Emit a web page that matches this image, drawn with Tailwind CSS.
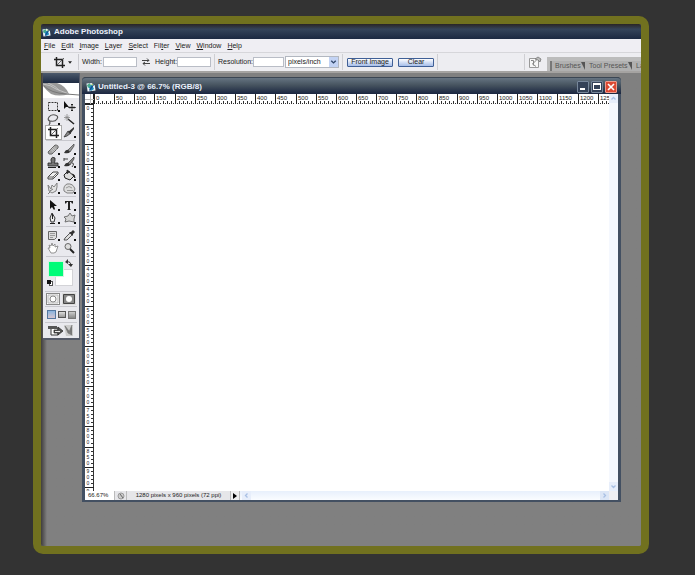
<!DOCTYPE html>
<html lang="en">
<head>
<meta charset="utf-8">
<title>Adobe Photoshop</title>
<script src="https://cdn.jsdelivr.net/npm/@tailwindcss/browser@4"></script>
</head>
<body class="flex min-h-screen flex-col bg-[#333333] pt-4 pr-[46px] pb-[21px] pl-[33px] font-['Liberation_Sans',Arial,sans-serif] text-[7px] leading-[10px] text-[#222]">
<svg class="hidden">
  <defs>
    <symbol id="app" viewBox="0 0 10 10"><path d="M1 1h5l3 3v5H1z" fill="#eef6fa" transform="rotate(-8 5 5)"/><path d="M2 4l4-1 2 4-3 2z" fill="#168bc0"/><path d="M1 3l3-2 1 3-3 2z" fill="#49a88b"/><path d="M3 8l4-6 1 1-4 6z" fill="#164d8c"/><path d="M5 2h2v2" fill="#a6d06b"/></symbol>
    <symbol id="crop" viewBox="0 0 15 13"><path d="M4.500 1v8.500h8.500M2 3.500h8.500V12" fill="none" stroke="#222" stroke-width="1.500"/><path d="M4.500 9.500L12 2" stroke="#444" stroke-width=".8"/></symbol>
    <symbol id="up" viewBox="0 0 9 9"><path d="M2.500 5.500l2-2 2 2" fill="none" stroke="#a9c0e4" stroke-width="1.300"/></symbol>
  </defs>
</svg>
<main class="flex flex-1 flex-col overflow-hidden rounded-[10px] border-8 border-[#71711f] bg-[#71711f]">
  <div class="flex flex-1 flex-col bg-[#808080]">
    <header class="flex h-[15px] items-center gap-[3px] bg-linear-to-b from-[#292526] via-[#35445a] via-35% to-[#1c2941] pt-px pl-px text-[8px] font-bold text-[#edf1fb]">
      <svg class="size-[9px]"><use href="#app"/></svg>
      <h1>Adobe Photoshop</h1>
    </header>
    <nav class="flex h-[13px] items-center gap-[6px] bg-[#efeef3] pl-[3px]">
      <a href="#"><u>F</u>ile</a><a href="#"><u>E</u>dit</a><a href="#"><u>I</u>mage</a><a href="#"><u>L</u>ayer</a><a href="#"><u>S</u>elect</a><a href="#">Fil<u>t</u>er</a><a href="#"><u>V</u>iew</a><a href="#"><u>W</u>indow</a><a href="#"><u>H</u>elp</a>
    </nav>
    <form class="flex h-[21px] items-center overflow-hidden border-t border-b-2 border-t-[#d6d6da] border-b-[#a5a3a1] bg-[#ededf1] whitespace-nowrap">
      <button type="button" aria-label="Crop tool presets" class="ml-[11px] flex h-4 w-[27px] shrink-0 items-center gap-[1px] border-r border-[#c9c9ce]"><svg class="h-[13px] w-[15px] shrink-0"><use href="#crop"/></svg><svg class="h-[3px] w-[4px]" viewBox="0 0 5 3"><path d="M0 0h5L2.500 3z" fill="#222"/></svg></button>
      <div class="ml-[3px] flex w-[55px] shrink-0 items-center justify-between"><label for="w">Width:</label><input id="w" class="h-[10px] w-[34px] border border-[#b9bdc6] bg-white"></div>
      <button type="button" aria-label="Swap width and height" class="mx-[5px] shrink-0"><svg class="h-[8px] w-[8px]" viewBox="0 0 8 8" fill="none" stroke="#444"><path d="M0 2.500h7M5 .5l2 2-2 1M8 5.500H1M3 4L1 5.500l2 2"/></svg></button>
      <div class="flex w-[56px] shrink-0 items-center justify-between"><label for="h">Height:</label><input id="h" class="h-[10px] w-[34px] border border-[#b9bdc6] bg-white"></div>
      <div class="mx-[3px] h-4 w-px shrink-0 bg-[#cfcfd3]"></div>
      <div class="flex w-[66px] shrink-0 items-center justify-between"><label for="r">Resolution:</label><input id="r" class="h-[10px] w-[34px] min-w-0 border border-[#b9bdc6] bg-white"></div>
      <div class="relative ml-px shrink-0">
        <select aria-label="Resolution unit" class="block h-3 w-[54px] appearance-none border border-[#b2b7c0] bg-white pl-[2px] leading-[10px]"><option>pixels/inch</option><option>pixels/cm</option></select>
        <svg class="pointer-events-none absolute top-px right-px h-[10px] w-[9px] bg-[#c3d3f4]" viewBox="0 0 10 10"><path d="M2.500 3.500L5 6l2.500-2.500" fill="none" stroke="#304669" stroke-width="1.500"/></svg>
      </div>
      <div class="mr-1 ml-[3px] h-4 w-px shrink-0 bg-[#cfcfd3]"></div>
      <button type="button" class="flex h-[9px] w-[46px] shrink-0 items-center justify-center rounded-[1px] border border-[#3f5f96] bg-linear-to-b from-white to-[#a6bde8]">Front Image</button>
      <button type="button" class="ml-[5px] flex h-[9px] w-9 shrink-0 items-center justify-center rounded-[1px] border border-[#3f5f96] bg-linear-to-b from-white to-[#a6bde8]">Clear</button>
      <div class="ml-[3px] h-4 w-px shrink-0 bg-[#cfcfd3]"></div>
      <div class="ml-auto h-4 w-px shrink-0 bg-[#cfcfd3]"></div>
      <button type="button" aria-label="Go to Bridge" class="mr-[5px] ml-[3px] shrink-0"><svg class="h-[13px] w-[14px]" viewBox="0 0 14 13"><path d="M1.500 2.500h9v9h-9z" fill="#f7f7f7" stroke="#999"/><path d="M3 4.500h2.500v5M4 7.500l4 3M5.500 7l3-3" stroke="#888" fill="none"/><path d="M7 3l3-2 3 2-1 3-2-2z" fill="#bbb" stroke="#777" stroke-width=".8"/></svg></button>
      <div class="mt-1 flex h-[14px] w-[94px] shrink-0 items-end overflow-hidden bg-[#bcbcbc] pl-[3px] text-[#555]">
        <a href="#" class="flex h-[10px] w-[35px] items-center border-l-2 border-[#777] bg-[#b0b0b0] pl-[3px]">Brushes<svg class="ml-auto h-[9px] w-[5px] shrink-0" viewBox="0 0 5 9"><path d="M0 0h4v8z" fill="#555"/></svg></a>
        <a href="#" class="flex h-[10px] w-[47px] items-center bg-[#b0b0b0] pl-[4px]">Tool Presets<svg class="ml-auto h-[9px] w-[5px] shrink-0" viewBox="0 0 5 9"><path d="M0 0h4v8z" fill="#555"/></svg></a>
        <a href="#" class="h-[10px] shrink-0 bg-[#b0b0b0] pl-[4px]">Layer Comps</a>
      </div>
    </form>

    <div class="flex flex-1 bg-linear-to-r from-[#403e3d] to-[#808080] to-[6px]">
      <aside aria-label="Tools" class="ml-[2px] flex w-[37px] shrink-0 flex-col self-start border-r border-b-2 border-[#555a68] bg-[#e9e9ee]">
        <div class="h-[10px] bg-linear-to-b from-[#4c596b] to-[#1d2a42]"></div>
        <svg class="h-[15px] w-full shrink-0 bg-white" viewBox="0 0 36 15" preserveAspectRatio="none"><path d="M0 0h14q9 3 12 11-10 3-18 0Q3 7 0 3z" fill="#999"/><path d="M0 1q8 1 13 5l13 5M5 0q8 3 12 8" fill="none" stroke="#c4c4c4"/><path d="M1 3q7 7 22 8l13 1" fill="none" stroke="#777"/></svg>
        <div id="tools" class="flex flex-col px-[3px]"></div>
        <div class="mx-[2px] flex h-[35px] border-b border-[#c8c8ce] px-px pt-[2px]">
          <svg class="h-[31px] w-[29px]" viewBox="0 0 29 31"><rect x="9.500" y="10.500" width="17" height="16" fill="#fff" stroke="#d3d3d7"/><rect x="2.500" y="2.500" width="15" height="15" fill="#00fc78" stroke="#d5f2e0"/><path d="M21 3q4-1 4 4" fill="none" stroke="#333"/><path d="M22 0v5l-3-2zM22 5h5l-2 3z" fill="#333"/><rect x="3.500" y="22.500" width="3" height="4" fill="#fff" stroke="#555"/><rect x="1" y="21" width="4" height="4" fill="#111"/></svg>
        </div>
        <div class="mx-[2px] flex h-[15px] items-center justify-center gap-[2px] border-b border-[#c8c8ce]">
          <button aria-label="Standard mode" class="h-3 w-[14px] border border-[#888] bg-white"><svg class="h-[10px] w-3" viewBox="0 0 12 10"><path d="M1 1h10v8H1z" fill="#eee" stroke="#bbb"/><circle cx="6" cy="5" r="3" fill="#fff" stroke="#888"/></svg></button>
          <button aria-label="Quick mask mode" class="h-3 w-[14px] bg-[#ddd]"><svg class="h-3 w-[14px]" viewBox="0 0 14 12"><path d="M1.500 1.500h11v9h-11z" fill="#888" stroke="#444"/><circle cx="7" cy="6" r="3" fill="#fff"/></svg></button>
        </div>
        <div class="mx-[2px] flex h-[16px] items-center justify-center gap-[2px] border-b border-[#c8c8ce]">
          <button aria-label="Standard screen" class="h-[9px] w-[9px] border border-[#5578a0] bg-linear-to-b from-[#89b4de] to-[#d6c5cf]"></button>
          <button aria-label="Full screen with menu" class="h-[7px] w-[8px] border border-[#555] bg-linear-to-b from-[#ddd] to-[#999]"></button>
          <button aria-label="Full screen" class="h-[8px] w-[8px] border border-[#777] bg-linear-to-b from-[#ccc] to-[#888]"></button>
        </div>
        <button aria-label="Edit in ImageReady" class="flex h-[15px] items-center justify-center"><svg class="h-[13px] w-[29px]" viewBox="0 0 29 13"><path d="M4 4h7v7H4z" fill="#fff" stroke="#333"/><path d="M1 2h9v3H1z" fill="#555"/><path d="M7 6h4V3l5 4-5 4V9H7z" fill="#555" stroke="#222" stroke-width=".7"/><path d="M8 7.500h5" stroke="#eee"/><path d="M17 1h9v11h-7z" fill="#ccc"/><path d="M18 2l7 9-4-2zM25 1l-3 7 3 3" fill="#777" stroke="#777" stroke-width=".7"/></svg></button>
      </aside>

      <section aria-label="Untitled-3" class="mt-1 mr-5 mb-11 ml-[2px] flex min-w-0 flex-1 flex-col rounded-t-[4px] border-[3px] border-t-0 border-b-2 border-[#435062] bg-[#35445a]">
        <div class="-mx-[3px] flex h-[17px] items-center gap-[2px] rounded-t-[4px] border-t border-[#3b4653] bg-linear-to-b from-[#667482] via-[#46535f] via-45% to-[#1b2640] pt-px pr-1 pl-1 text-[8px] font-bold text-[#e9f0fb]">
          <svg class="size-[10px] shrink-0"><use href="#app"/></svg>
          <h2 class="flex-1">Untitled-3 @ 66.7% (RGB/8)</h2>
          <button aria-label="Minimize" class="flex size-3 items-end rounded-[1px] border border-[#77879b] bg-[#344258] p-[2px]"><span class="h-[2px] w-[5px] bg-white"></span></button>
          <button aria-label="Maximize" class="flex size-3 items-center justify-center rounded-[1px] border border-[#77879b] bg-[#344258]"><span class="h-[7px] w-2 border border-t-2 border-white"></span></button>
          <button aria-label="Close" class="flex size-3 items-center justify-center rounded-[1px] border border-[#f09b8c] bg-[#dc4933]"><svg class="size-2" viewBox="0 0 8 8"><path d="M1 1l6 6M7 1L1 7" stroke="#fff" stroke-width="1.600"/></svg></button>
        </div>
        <div class="flex flex-1 bg-white">
          <div class="flex w-[9px] shrink-0 flex-col">
            <svg class="h-[10px] w-[9px] shrink-0" viewBox="0 0 9 10"><path d="M0 9.500h9M8.500 0v10" stroke="#222"/><path d="M0 5.500h9M5.500 0v10" stroke="#bbb"/></svg>
            <svg id="vr" class="h-0 min-h-0 w-[9px] flex-1" text-anchor="middle"></svg>
          </div>
          <div class="flex min-w-0 flex-1 flex-col">
            <svg id="hr" class="h-[10px] w-full"></svg>
            <div class="flex-1 bg-white"></div>
          </div>
          <div class="flex w-[9px] shrink-0 flex-col justify-between bg-[#f5f8fe]"><svg class="size-[9px] bg-[#e7eefb]"><use href="#up"/></svg><svg class="size-[9px] rotate-180 bg-[#e7eefb]"><use href="#up"/></svg></div>
        </div>
        <footer class="flex h-[9px] items-center bg-white text-[6px] leading-[9px] whitespace-nowrap">
          <span class="w-[29px] pl-[3px]">66.67%</span>
          <span class="flex h-[9px] w-[13px] items-center justify-center border-x border-[#bbb] bg-[#e6e6e9]"><svg class="size-[8px]" viewBox="0 0 8 8"><circle cx="4" cy="4" r="3" fill="#ccc" stroke="#999"/><path d="M3 2l3 4" stroke="#666"/></svg></span>
          <span class="h-[9px] w-[103px] bg-[#e6e6e9] text-center">1280 pixels x 960 pixels (72 ppi)</span>
          <button aria-label="Status options" class="flex h-[9px] w-[10px] items-center justify-center border-x border-[#bbb] bg-[#eee]"><svg class="h-[6px] w-[4px]" viewBox="0 0 4 6"><path d="M0 0l4 3-4 3z" fill="#000"/></svg></button>
          <span class="flex h-[9px] flex-1 justify-between bg-linear-to-b from-[#e8f0fc] to-[#fafcff] pl-[2px]"><svg class="size-[9px] -rotate-90 bg-[#e7eefb]"><use href="#up"/></svg><svg class="size-[9px] rotate-90 bg-[#dce6f6]"><use href="#up"/></svg></span>
          <span class="h-[9px] w-[9px] bg-[#eeeef2]"></span>
        </footer>
      </section>
    </div>
  </div>
</main>
<script>
// Tool glyphs on a 15x13 grid; a trailing flag marks tools with a flyout.
const groups = [
  [
    ['Marquee','<rect x="2.500" y="2.500" width="9" height="8" fill="none" stroke="#333" stroke-dasharray="2 1"/>',1],
    ['Move','<path d="M2 1v8l2-2 3 0z" fill="#111"/><path d="M10 4v7M6.500 7.500h7M9 5l1-1 1 1M9 10l1 1 1-1M8 6.500l-1 1 1 1M12 6.500l1 1-1 1" stroke="#222" fill="none"/>',0],
    ['Lasso','<path d="M4 8Q1 7 3 4t6-2q4 1 2 4T5 8q-2 0-1 2l-1 2" fill="none" stroke="#555" stroke-width="1.200"/>',1],
    ['Magic wand','<path d="M6 6l6 5" stroke="#222" stroke-width="1.500"/><path d="M5 1v7M2 4.500h6M3 2.500l4 4M7 2.500l-4 4" stroke="#888" stroke-width=".8"/>',0],
    ['Crop','<use href="#crop"/>',0],
    ['Slice','<path d="M2 11l4-6 3 2-4 3z" fill="#888" stroke="#333" stroke-width=".8"/><path d="M6 6l6-5 0 2-4 5z" fill="#333"/>',1]
  ],[
    ['Healing brush','<path d="M2 9L9 2q4 0 3 3l-6 6q-4 1-4-2z" fill="#a5a5a5" stroke="#666"/><path d="M6 5l3 3M5 6.500l3 3M7.500 4l3 3" stroke="#ddd" stroke-width=".7"/>',1],
    ['Brush','<path d="M6 7l6-6 0 2-4 6z" fill="#999" stroke="#444" stroke-width=".7"/><path d="M2 10q2-4 4-3l2 2q-1 2-6 1z" fill="#333"/>',1],
    ['Clone stamp','<path d="M5 5V3q1-3 4-1v3l-1 2h4v3H2V7h4z" fill="#777" stroke="#222" stroke-width=".8"/><path d="M2 11.500h8" stroke="#222"/>',1],
    ['History brush','<path d="M6 7l6-6 0 2-4 6z" fill="#888" stroke="#333" stroke-width=".7"/><path d="M2 10q2-4 4-3l2 2q-1 2-6 1z" fill="#333"/><path d="M2 3h4M2 2v3M10 7q3 0 0 4" fill="none" stroke="#444"/>',1],
    ['Eraser','<path d="M2 8l5-5h5v2l-5 5H2z" fill="#eee" stroke="#444"/><path d="M2 8h5l5-5M7 8v2" fill="none" stroke="#666"/>',1],
    ['Paint bucket','<path d="M2 6l4-4 6 5-4 4-5-2z" fill="#ddd" stroke="#222"/><path d="M5 5V1l3 2M10 5q3 0 3 4l-2-3" fill="#333" stroke="#222" stroke-width=".8"/>',1],
    ['Smudge','<path d="M2 3l3 4 1-4 2 2 3-4v4l-1 4-4 2-3-2z" fill="#e2e2e2" stroke="#777" stroke-width=".9"/><path d="M4 9l3-2M4 10l-2 2" stroke="#777"/>',1],
    ['Sponge','<path d="M2 9q-1-5 3-7 6-1 8 5l-2 4H5z" fill="#ddd" stroke="#777" stroke-width=".9"/><path d="M4 6q3-3 6 0M5 8.500h6" fill="none" stroke="#999"/>',1]
  ],[
    ['Path selection','<path d="M4 1v9l2-2 2 3 1-1-1-3h3z" fill="#111"/>',1],
    ['Type','<path d="M3 2h8v2.500h-1L9 3H8v7l1 1H5l1-1V3H5L4 4.500H3z" fill="#222"/>',1],
    ['Pen','<path d="M6 1l3 5-1 4H5L4 6z" fill="#eee" stroke="#333"/><path d="M6.500 2v5M4 11.500h5" stroke="#222"/>',1],
    ['Shape','<path d="M3 10l1-3-2-2 4-1 2-3 2 3 3-1-1 4 0 3-5-1z" fill="#d5d5d5" stroke="#666" stroke-width=".9"/>',1]
  ],[
    ['Notes','<path d="M2.500 2.500h8v6l-2 2h-6z" fill="#ddd" stroke="#666"/><path d="M4 4.500h5M4 6.500h5M4 8.500h3" stroke="#999"/>',1],
    ['Eyedropper','<path d="M2 11l1-2 5-5 2 2-5 5z" fill="#ddd" stroke="#333" stroke-width=".8"/><path d="M7 3l2 0 2-2 2 2-2 2v2z" fill="#333"/>',1],
    ['Hand','<path d="M2 6l2 0-1-3 2 1 1-3 1 3 2-2v3l3-1-2 6-2 1H5z" fill="#fff" stroke="#888" stroke-width=".9"/>',0],
    ['Zoom','<circle cx="6" cy="4.500" r="3" fill="#ddd" stroke="#666"/><path d="M8 7l4 4" stroke="#222" stroke-width="2"/>',0]
  ]];
document.getElementById('tools').innerHTML = groups.map(g =>
  '<div class="grid grid-cols-2 gap-x-[1px] border-b border-[#c8c8ce] pt-[2px] pb-[1px]">' + g.map(([n, p, f]) =>
    `<button aria-label="${n}" class="${n === 'Crop' ? 'bg-white outline outline-[#aaa]' : ''} h-[13px]"><svg class="h-[13px] w-[15px]" viewBox="0 0 15 13">${p}${f ? '<path d="M12 10h2v2h-2z" fill="#111"/>' : ''}</svg></button>`).join('') + '</div>').join('');

// Rulers: a labelled division every 50 px of the document, at 66.7% on a scaled screen.
const step = 20.15;
function ruler(id, last, horizontal) {
  let s = horizontal ? '' : '<path d="M8.500 0v3000" stroke="#333"/>';
  for (let i = 0; i <= last / 50; i++) {
    const p = Math.round(i * step), label = String(i * 50);
    if (horizontal) {
      s += `<path d="M${p + .5} 0v10" stroke="#222"/><text x="${p + 2}" y="6" font-size="6" fill="#222">${label}</text>`;
    } else {
      s += `<path d="M0 ${p + .5}h9" stroke="#222"/>`;
      label.split('').forEach((c, k) => s += `<text x="3" y="${p + 6 + k * 6}" font-size="5" fill="#222">${c}</text>`);
    }
    for (let k = 1; k < 10; k++) {
      const q = Math.round((i + k / 10) * step) + .5, long = k % 2 === 0;
      s += horizontal
        ? `<path d="M${q} ${long ? 7 : 9}V10" stroke="#333"/>`
        : long ? `<path d="M6 ${q}h3" stroke="#333"/>` : '';
    }
  }
  document.getElementById(id).innerHTML = s;
}
ruler('hr', 1250, true);
ruler('vr', 950, false);
</script>
</body>
</html>
